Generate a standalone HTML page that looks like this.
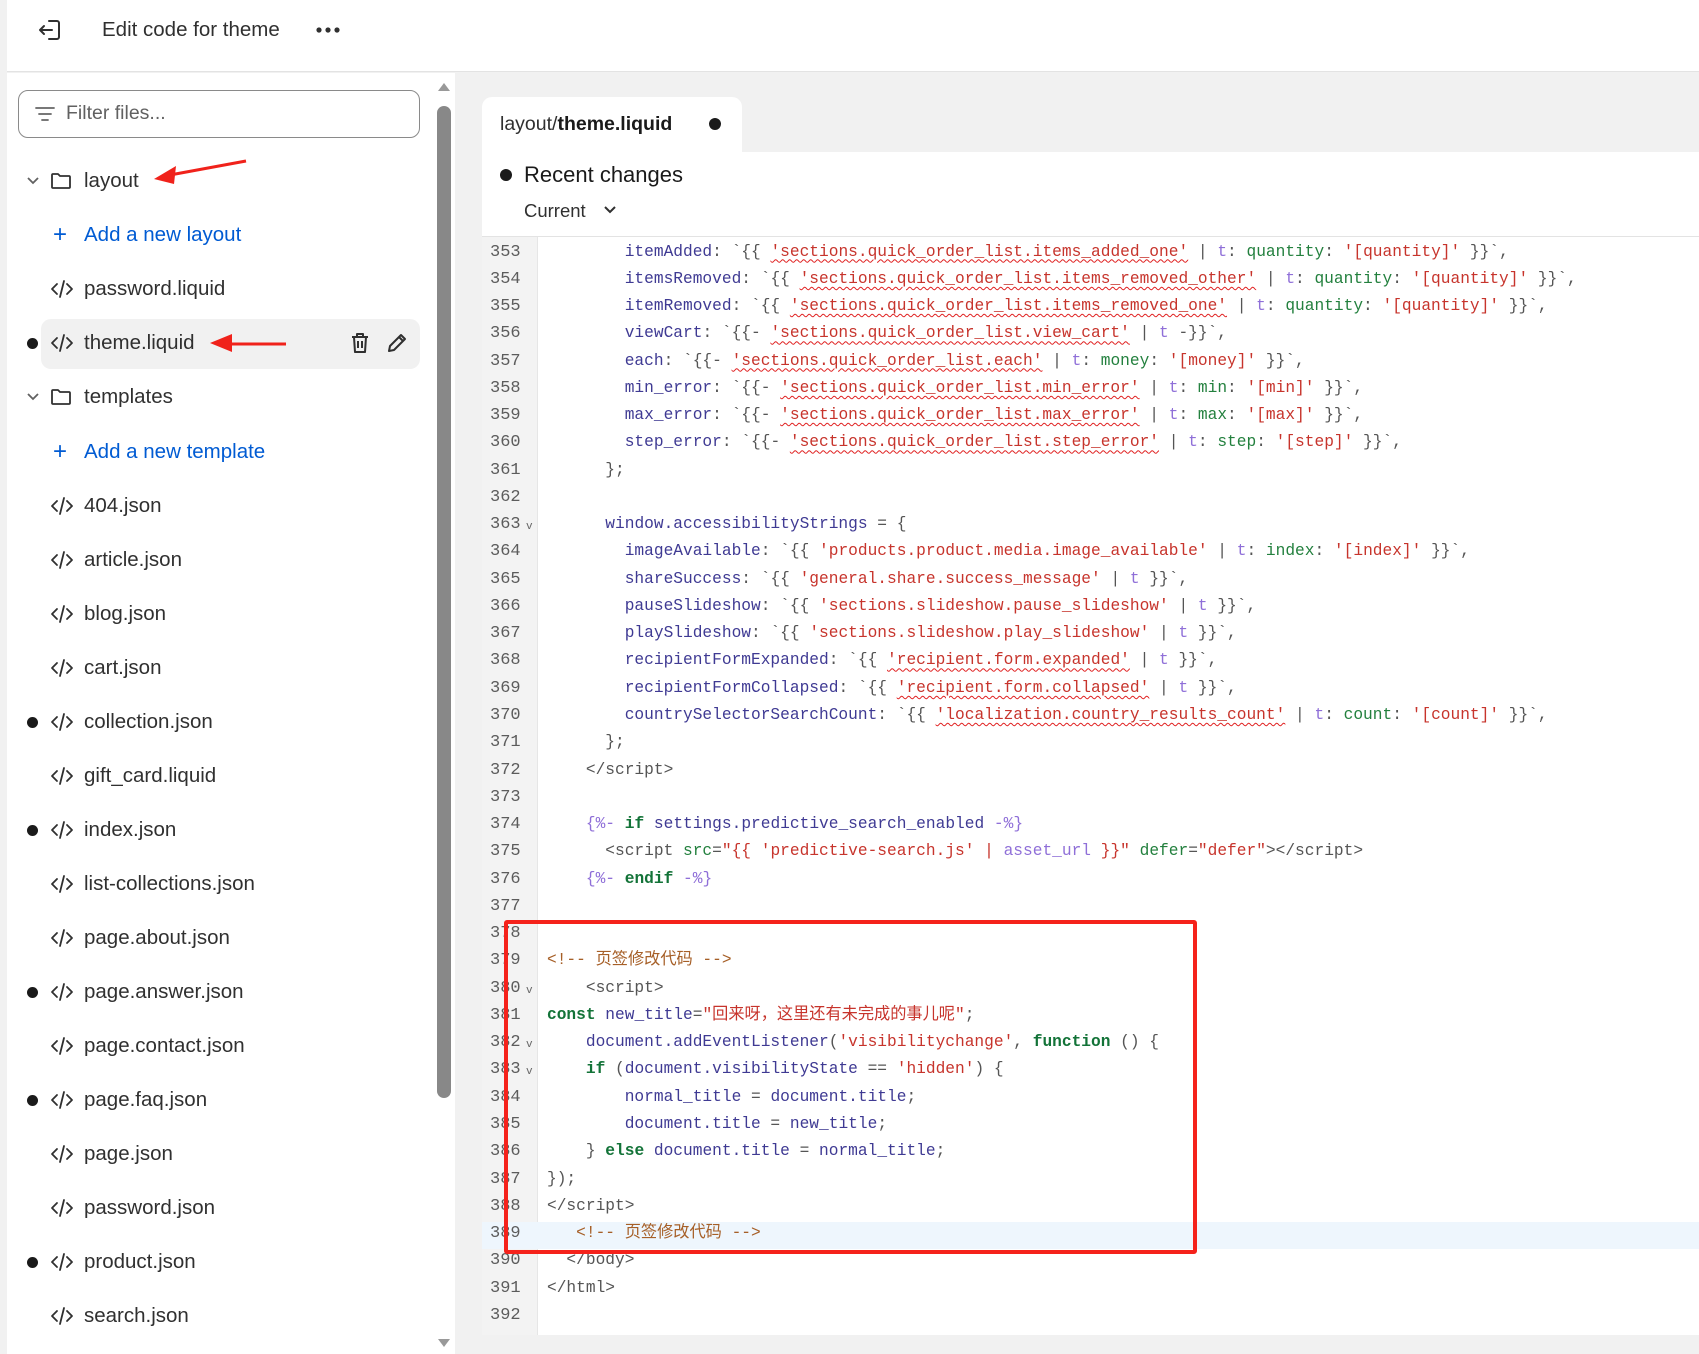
<!DOCTYPE html>
<html><head><meta charset="utf-8"><style>
*{margin:0;padding:0;box-sizing:border-box}
body{width:1699px;height:1354px;background:#f1f1f1;font-family:"Liberation Sans","Noto Sans CJK SC",sans-serif;color:#303030;position:relative;overflow:hidden}
.hdr{position:absolute;left:7px;top:0;width:1692px;height:72px;background:#fff;border-bottom:1px solid #e3e3e3}
.side{position:absolute;left:7px;top:73px;width:448px;height:1281px;background:#fff}
.abs{position:absolute}
.item{position:absolute;left:0;height:54px;line-height:54px;font-size:20.5px;color:#303030;white-space:nowrap}
.item .t{position:absolute;left:84px;top:0}
.dot{position:absolute;left:27px;top:22px;width:11px;height:11px;border-radius:50%;background:#1a1a1a}
.ic{position:absolute;left:50px;top:17px}
.cd{position:absolute;left:50px;top:17px}
.panel{position:absolute;left:482px;top:152px;width:1217px;height:1183px;background:#fff;border-bottom-left-radius:10px}
.gut{position:absolute;left:482px;top:237px;width:56px;height:1098px;background:#f3f3f3;border-right:1px solid #e6e6e6}
.code{position:absolute;left:0;top:238.5px;width:1699px;font-family:"Liberation Mono","Noto Sans CJK SC",monospace;font-size:16.2px}
.ln{position:relative;height:27.28px;line-height:27.28px;white-space:pre}
.ln .n{position:absolute;left:490px;color:#5c5c5c;font-size:17px}
.ln .c{position:absolute;left:547px;color:#555}
.ln .v{position:absolute;left:526px;font-size:11px;color:#666;top:3px}
.p{color:#3f3a93}.s{color:#c7342c}.w{text-decoration:underline wavy #e02020;text-decoration-thickness:1px;text-underline-offset:3px}
.f{color:#8f6fd8}.g{color:#23803e}.k{color:#137338;font-weight:bold}.cm{color:#a65f27}.d{color:#6a6a6a}
</style></head><body>
<svg width="0" height="0" style="position:absolute"><defs><symbol id="code" viewBox="0 0 24 20"><path d="M7 5l-5 5 5 5M17 5l5 5-5 5M14 2l-4 16" fill="none" stroke="#303030" stroke-width="1.8" stroke-linecap="round" stroke-linejoin="round"/></symbol></defs></svg>
<div class="hdr">
 <svg class="abs" style="left:30px;top:18px" width="26" height="24" viewBox="0 0 26 24" fill="none" stroke="#303030" stroke-width="2" stroke-linecap="round" stroke-linejoin="round"><path d="M12 3h8a2 2 0 0 1 2 2v14a2 2 0 0 1-2 2h-8"/><path d="M15 12H3M7 8l-4 4 4 4"/></svg>
 <div class="abs" style="left:95px;top:18px;font-size:20.5px;color:#303030">Edit code for theme</div>
 <svg class="abs" style="left:308px;top:26px" width="26" height="8" viewBox="0 0 26 8" fill="#303030"><circle cx="4" cy="4" r="2.6"/><circle cx="13" cy="4" r="2.6"/><circle cx="22" cy="4" r="2.6"/></svg>
</div>
<div class="side">
 <div class="abs" style="left:11px;top:17px;width:402px;height:48px;border:1px solid #8a8a8a;border-radius:10px"></div>
 <svg class="abs" style="left:27px;top:32px" width="22" height="18" viewBox="0 0 22 18" stroke="#666" stroke-width="1.8" stroke-linecap="round"><path d="M2 3h18M5 9h12M8 15h6"/></svg>
 <div class="abs" style="left:59px;top:29px;font-size:19.5px;color:#616161">Filter files...</div>
 <div class="abs" style="left:34px;top:246px;width:379px;height:50px;background:#f1f1f1;border-radius:10px"></div>
 <div class="abs" style="left:430px;top:33px;width:14px;height:992px;background:#888;border-radius:7px"></div>
 <div class="abs" style="left:431px;top:10px;width:0;height:0;border-left:6px solid transparent;border-right:6px solid transparent;border-bottom:8px solid #999"></div>
 <div class="abs" style="left:431px;top:1266px;width:0;height:0;border-left:6px solid transparent;border-right:6px solid transparent;border-top:8px solid #999"></div>
</div>
<div class="abs" style="left:482px;top:97px;width:260px;height:60px;background:#fff;border-radius:10px 10px 0 0"></div>
<div class="abs" style="left:500px;top:113px;font-size:19.5px">layout/<b style="font-weight:600;color:#1a1a1a">theme.liquid</b></div>
<div class="abs" style="left:709px;top:118px;width:12px;height:12px;border-radius:50%;background:#1a1a1a"></div>
<div class="panel"></div>
<div class="abs" style="left:500px;top:169px;width:12px;height:12px;border-radius:50%;background:#1a1a1a"></div>
<div class="abs" style="left:524px;top:162px;font-size:22px;color:#1a1a1a">Recent changes</div>
<div class="abs" style="left:524px;top:200px;font-size:18.5px;color:#303030">Current</div>
<svg class="abs" style="left:603px;top:205px" width="14" height="10" viewBox="0 0 14 10" fill="none" stroke="#303030" stroke-width="2"><path d="M2 2l5 5 5-5"/></svg>
<div class="abs" style="left:482px;top:236px;width:1217px;height:1px;background:#e3e3e3"></div>
<div class="gut"></div>
<div class="abs" style="left:482px;top:1222px;width:1217px;height:27px;background:#eef6fd"></div>
<div class="code">
<div class="ln"><span class="n">353</span><span class="c">        <span class="p">itemAdded</span>: `{{ <span class="s w">'sections.quick_order_list.items_added_one'</span> | <span class="f">t</span>: <span class="g">quantity</span>: <span class="s">'[quantity]'</span> }}`,</span></div>
<div class="ln"><span class="n">354</span><span class="c">        <span class="p">itemsRemoved</span>: `{{ <span class="s w">'sections.quick_order_list.items_removed_other'</span> | <span class="f">t</span>: <span class="g">quantity</span>: <span class="s">'[quantity]'</span> }}`,</span></div>
<div class="ln"><span class="n">355</span><span class="c">        <span class="p">itemRemoved</span>: `{{ <span class="s w">'sections.quick_order_list.items_removed_one'</span> | <span class="f">t</span>: <span class="g">quantity</span>: <span class="s">'[quantity]'</span> }}`,</span></div>
<div class="ln"><span class="n">356</span><span class="c">        <span class="p">viewCart</span>: `{{- <span class="s w">'sections.quick_order_list.view_cart'</span> | <span class="f">t</span> -}}`,</span></div>
<div class="ln"><span class="n">357</span><span class="c">        <span class="p">each</span>: `{{- <span class="s w">'sections.quick_order_list.each'</span> | <span class="f">t</span>: <span class="g">money</span>: <span class="s">'[money]'</span> }}`,</span></div>
<div class="ln"><span class="n">358</span><span class="c">        <span class="p">min_error</span>: `{{- <span class="s w">'sections.quick_order_list.min_error'</span> | <span class="f">t</span>: <span class="g">min</span>: <span class="s">'[min]'</span> }}`,</span></div>
<div class="ln"><span class="n">359</span><span class="c">        <span class="p">max_error</span>: `{{- <span class="s w">'sections.quick_order_list.max_error'</span> | <span class="f">t</span>: <span class="g">max</span>: <span class="s">'[max]'</span> }}`,</span></div>
<div class="ln"><span class="n">360</span><span class="c">        <span class="p">step_error</span>: `{{- <span class="s w">'sections.quick_order_list.step_error'</span> | <span class="f">t</span>: <span class="g">step</span>: <span class="s">'[step]'</span> }}`,</span></div>
<div class="ln"><span class="n">361</span><span class="c">      };</span></div>
<div class="ln"><span class="n">362</span></div>
<div class="ln"><span class="n">363</span><span class="v">v</span><span class="c">      <span class="p">window.accessibilityStrings</span> = {</span></div>
<div class="ln"><span class="n">364</span><span class="c">        <span class="p">imageAvailable</span>: `{{ <span class="s">'products.product.media.image_available'</span> | <span class="f">t</span>: <span class="g">index</span>: <span class="s">'[index]'</span> }}`,</span></div>
<div class="ln"><span class="n">365</span><span class="c">        <span class="p">shareSuccess</span>: `{{ <span class="s">'general.share.success_message'</span> | <span class="f">t</span> }}`,</span></div>
<div class="ln"><span class="n">366</span><span class="c">        <span class="p">pauseSlideshow</span>: `{{ <span class="s">'sections.slideshow.pause_slideshow'</span> | <span class="f">t</span> }}`,</span></div>
<div class="ln"><span class="n">367</span><span class="c">        <span class="p">playSlideshow</span>: `{{ <span class="s">'sections.slideshow.play_slideshow'</span> | <span class="f">t</span> }}`,</span></div>
<div class="ln"><span class="n">368</span><span class="c">        <span class="p">recipientFormExpanded</span>: `{{ <span class="s w">'recipient.form.expanded'</span> | <span class="f">t</span> }}`,</span></div>
<div class="ln"><span class="n">369</span><span class="c">        <span class="p">recipientFormCollapsed</span>: `{{ <span class="s w">'recipient.form.collapsed'</span> | <span class="f">t</span> }}`,</span></div>
<div class="ln"><span class="n">370</span><span class="c">        <span class="p">countrySelectorSearchCount</span>: `{{ <span class="s w">'localization.country_results_count'</span> | <span class="f">t</span>: <span class="g">count</span>: <span class="s">'[count]'</span> }}`,</span></div>
<div class="ln"><span class="n">371</span><span class="c">      };</span></div>
<div class="ln"><span class="n">372</span><span class="c">    &lt;/script&gt;</span></div>
<div class="ln"><span class="n">373</span></div>
<div class="ln"><span class="n">374</span><span class="c">    <span class="f">{%-</span> <span class="k">if</span> <span class="p">settings.predictive_search_enabled</span> <span class="f">-%}</span></span></div>
<div class="ln"><span class="n">375</span><span class="c">      &lt;script <span class="g">src</span>=<span class="s">"{{ 'predictive-search.js' | <span class="f">asset_url</span> }}"</span> <span class="g">defer</span>=<span class="s">"defer"</span>&gt;&lt;/script&gt;</span></div>
<div class="ln"><span class="n">376</span><span class="c">    <span class="f">{%-</span> <span class="k">endif</span> <span class="f">-%}</span></span></div>
<div class="ln"><span class="n">377</span></div>
<div class="ln"><span class="n">378</span></div>
<div class="ln"><span class="n">379</span><span class="c"><span class="cm">&lt;!-- 页签修改代码 --&gt;</span></span></div>
<div class="ln"><span class="n">380</span><span class="v">v</span><span class="c">    &lt;script&gt;</span></div>
<div class="ln"><span class="n">381</span><span class="c"><span class="k">const</span> <span class="p">new_title</span>=<span class="s">"回来呀，这里还有未完成的事儿呢"</span>;</span></div>
<div class="ln"><span class="n">382</span><span class="v">v</span><span class="c">    <span class="p">document.addEventListener</span>(<span class="s">'visibilitychange'</span>, <span class="k">function</span> () {</span></div>
<div class="ln"><span class="n">383</span><span class="v">v</span><span class="c">    <span class="k">if</span> (<span class="p">document.visibilityState</span> == <span class="s">'hidden'</span>) {</span></div>
<div class="ln"><span class="n">384</span><span class="c">        <span class="p">normal_title</span> = <span class="p">document.title</span>;</span></div>
<div class="ln"><span class="n">385</span><span class="c">        <span class="p">document.title</span> = <span class="p">new_title</span>;</span></div>
<div class="ln"><span class="n">386</span><span class="c">    } <span class="k">else</span> <span class="p">document.title</span> = <span class="p">normal_title</span>;</span></div>
<div class="ln"><span class="n">387</span><span class="c">});</span></div>
<div class="ln"><span class="n">388</span><span class="c">&lt;/script&gt;</span></div>
<div class="ln"><span class="n">389</span><span class="c">   <span class="cm">&lt;!-- 页签修改代码 --&gt;</span></span></div>
<div class="ln"><span class="n">390</span><span class="c">  &lt;/body&gt;</span></div>
<div class="ln"><span class="n">391</span><span class="c">&lt;/html&gt;</span></div>
<div class="ln"><span class="n">392</span></div>
</div>
<div class="abs" style="left:504px;top:920px;width:693px;height:334px;border:4px solid #f5221b;border-radius:3px"></div>
<div class="abs" style="left:0;top:0;width:460px;height:1354px">
 <div class="item" style="top:154px;width:440px">
  <svg class="abs" style="left:26px;top:21px" width="14" height="12" viewBox="0 0 14 12" fill="none" stroke="#616161" stroke-width="1.8"><path d="M2 3l5 5 5-5"/></svg>
  <svg class="ic" width="22" height="20" viewBox="0 0 22 20" fill="none" stroke="#303030" stroke-width="1.8" stroke-linejoin="round"><path d="M2 4a1 1 0 0 1 1-1h5l2 2h9a1 1 0 0 1 1 1v10a1 1 0 0 1-1 1H3a1 1 0 0 1-1-1z"/></svg>
  <span class="t">layout</span></div>
</div>
<svg class="abs" style="left:150px;top:158px" width="100" height="30" viewBox="0 0 100 30"><path d="M96 3L20 17" stroke="#f0221b" stroke-width="3"/><path d="M4 21L26 8l-2 18z" fill="#f0221b"/></svg>
<svg class="abs" style="left:208px;top:331px" width="82" height="24" viewBox="0 0 82 24"><path d="M78 13H18" stroke="#f0221b" stroke-width="3"/><path d="M2 12l22-9v18z" fill="#f0221b"/></svg>
<div class="abs" style="left:0;top:0;width:460px;height:1354px">
 <div class="item" style="top:208px"><span class="abs" style="left:53px;font-size:24px;color:#005bd3">+</span><span class="t" style="color:#005bd3">Add a new layout</span></div>
 <div class="item" style="top:262px"><svg class="cd" width="24" height="20"><use href="#code"/></svg><span class="t">password.liquid</span></div>
 <div class="item" style="top:316px"><span class="dot"></span><svg class="cd" width="24" height="20"><use href="#code"/></svg><span class="t">theme.liquid</span>
  <svg class="abs" style="left:350px;top:16px" width="20" height="22" viewBox="0 0 20 22" fill="none" stroke="#303030" stroke-width="2" stroke-linejoin="round"><path d="M2 5h16M7 5V2h6v3M4 5l1 15h10l1-15M8 9v7M12 9v7"/></svg>
  <svg class="abs" style="left:386px;top:16px" width="22" height="22" viewBox="0 0 22 22" fill="none" stroke="#303030" stroke-width="2" stroke-linejoin="round"><path d="M3 19l1-5L15 3l4 4L8 18z M13 5l4 4"/></svg></div>
 <div class="item" style="top:370px">
  <svg class="abs" style="left:26px;top:21px" width="14" height="12" viewBox="0 0 14 12" fill="none" stroke="#616161" stroke-width="1.8"><path d="M2 3l5 5 5-5"/></svg>
  <svg class="ic" width="22" height="20" viewBox="0 0 22 20" fill="none" stroke="#303030" stroke-width="1.8" stroke-linejoin="round"><path d="M2 4a1 1 0 0 1 1-1h5l2 2h9a1 1 0 0 1 1 1v10a1 1 0 0 1-1 1H3a1 1 0 0 1-1-1z"/></svg>
  <span class="t">templates</span></div>
 <div class="item" style="top:425px"><span class="abs" style="left:53px;font-size:24px;color:#005bd3">+</span><span class="t" style="color:#005bd3">Add a new template</span></div>
 <div class="item" style="top:479px"><svg class="cd" width="24" height="20"><use href="#code"/></svg><span class="t">404.json</span></div>
 <div class="item" style="top:533px"><svg class="cd" width="24" height="20"><use href="#code"/></svg><span class="t">article.json</span></div>
 <div class="item" style="top:587px"><svg class="cd" width="24" height="20"><use href="#code"/></svg><span class="t">blog.json</span></div>
 <div class="item" style="top:641px"><svg class="cd" width="24" height="20"><use href="#code"/></svg><span class="t">cart.json</span></div>
 <div class="item" style="top:695px"><span class="dot"></span><svg class="cd" width="24" height="20"><use href="#code"/></svg><span class="t">collection.json</span></div>
 <div class="item" style="top:749px"><svg class="cd" width="24" height="20"><use href="#code"/></svg><span class="t">gift_card.liquid</span></div>
 <div class="item" style="top:803px"><span class="dot"></span><svg class="cd" width="24" height="20"><use href="#code"/></svg><span class="t">index.json</span></div>
 <div class="item" style="top:857px"><svg class="cd" width="24" height="20"><use href="#code"/></svg><span class="t">list-collections.json</span></div>
 <div class="item" style="top:911px"><svg class="cd" width="24" height="20"><use href="#code"/></svg><span class="t">page.about.json</span></div>
 <div class="item" style="top:965px"><span class="dot"></span><svg class="cd" width="24" height="20"><use href="#code"/></svg><span class="t">page.answer.json</span></div>
 <div class="item" style="top:1019px"><svg class="cd" width="24" height="20"><use href="#code"/></svg><span class="t">page.contact.json</span></div>
 <div class="item" style="top:1073px"><span class="dot"></span><svg class="cd" width="24" height="20"><use href="#code"/></svg><span class="t">page.faq.json</span></div>
 <div class="item" style="top:1127px"><svg class="cd" width="24" height="20"><use href="#code"/></svg><span class="t">page.json</span></div>
 <div class="item" style="top:1181px"><svg class="cd" width="24" height="20"><use href="#code"/></svg><span class="t">password.json</span></div>
 <div class="item" style="top:1235px"><span class="dot"></span><svg class="cd" width="24" height="20"><use href="#code"/></svg><span class="t">product.json</span></div>
 <div class="item" style="top:1289px"><svg class="cd" width="24" height="20"><use href="#code"/></svg><span class="t">search.json</span></div>
</div>
</body></html>
